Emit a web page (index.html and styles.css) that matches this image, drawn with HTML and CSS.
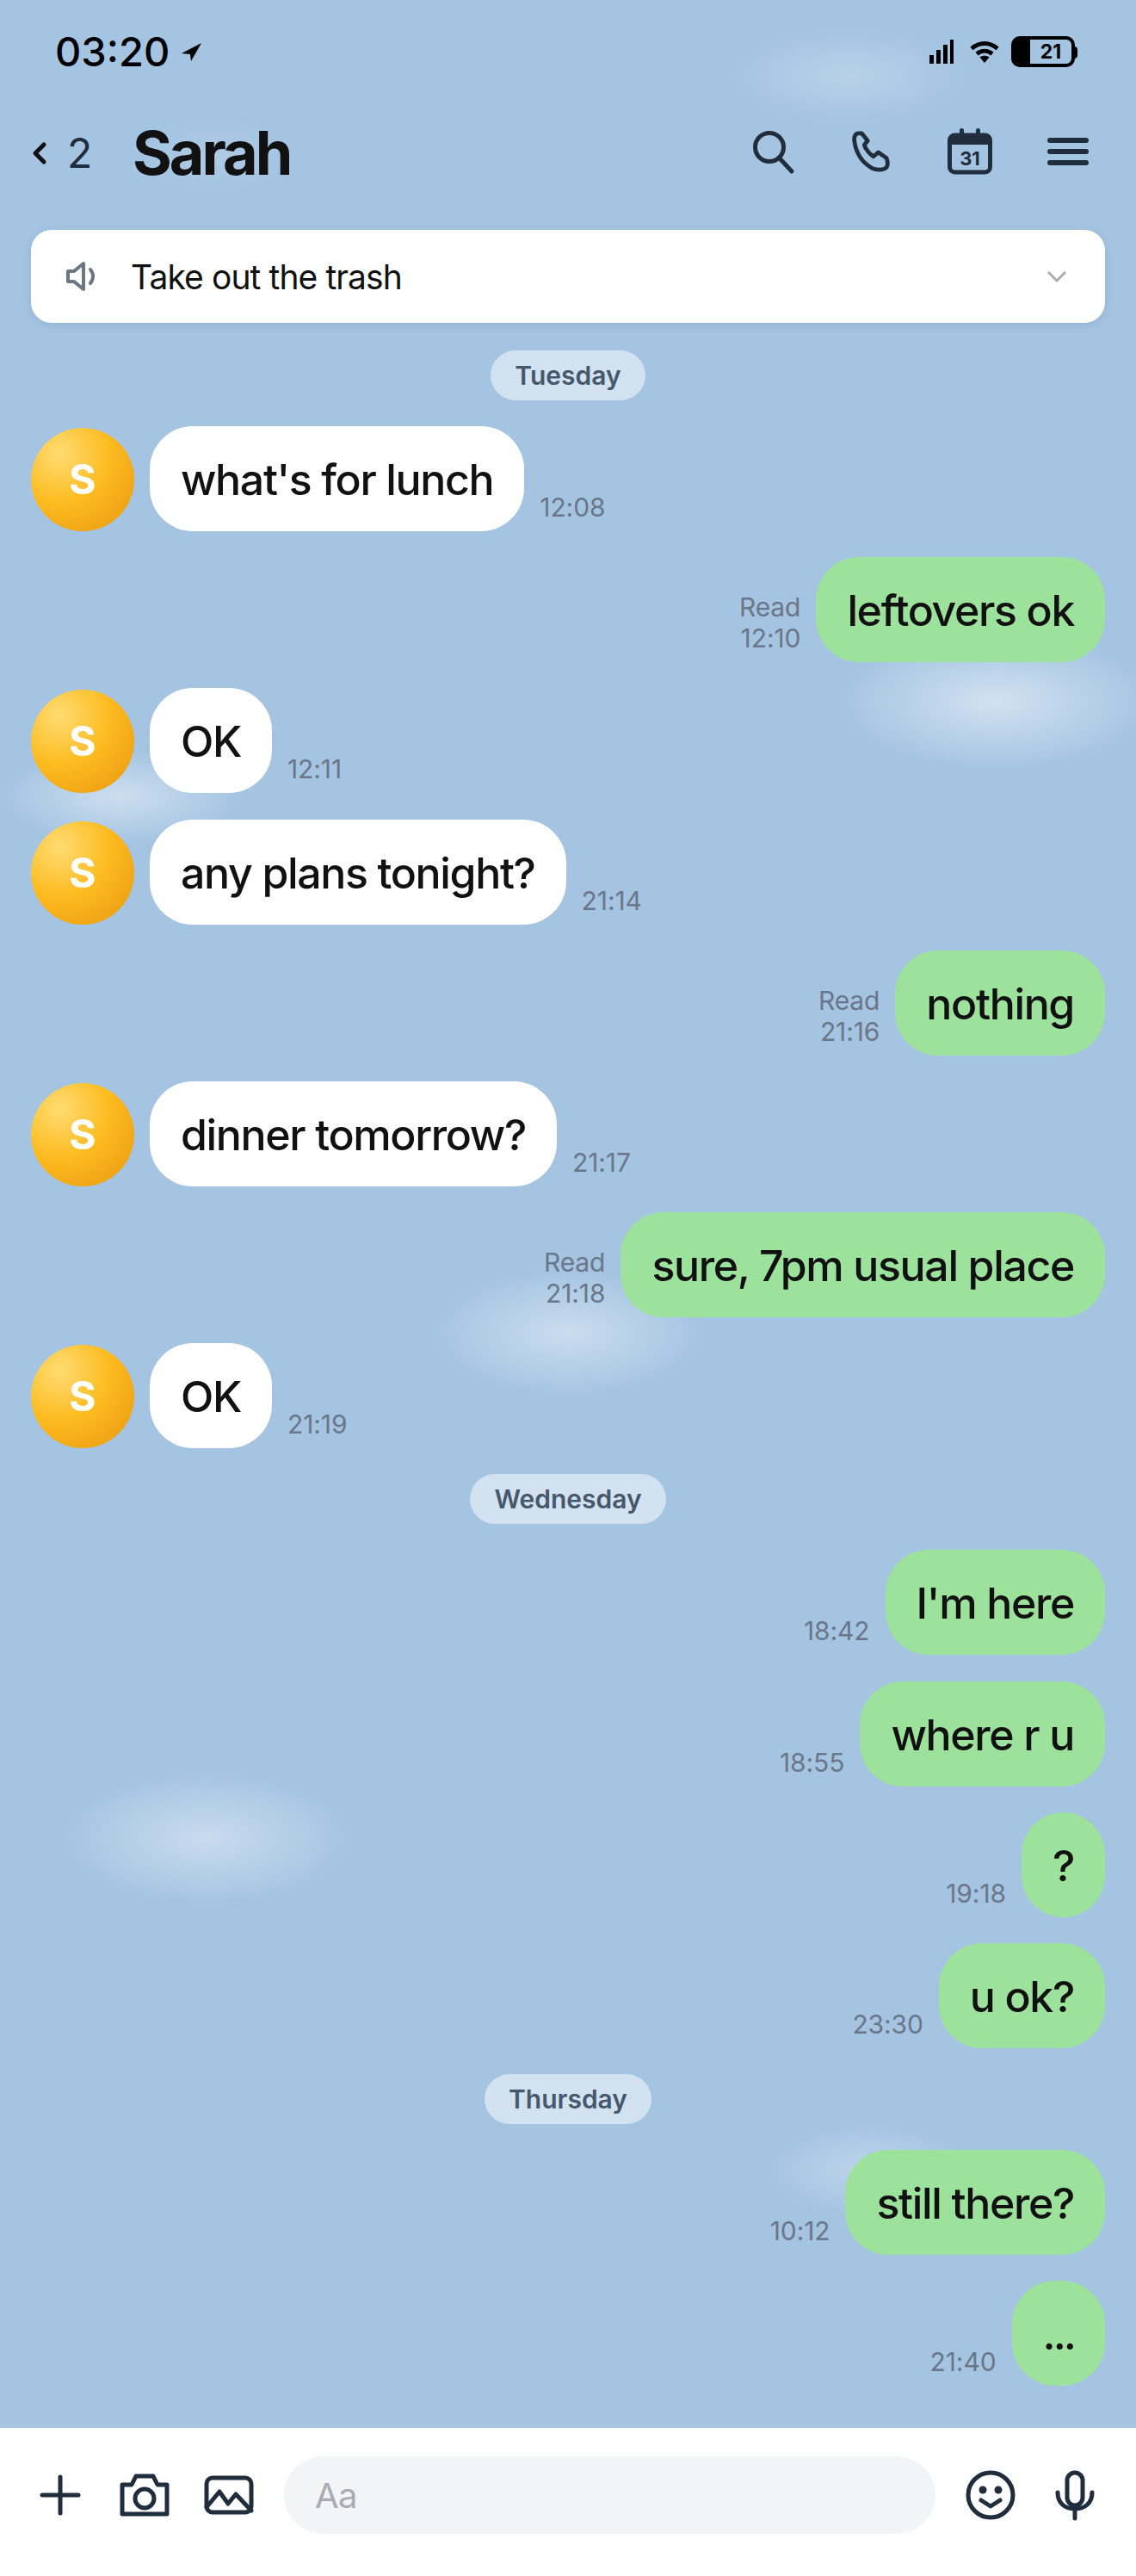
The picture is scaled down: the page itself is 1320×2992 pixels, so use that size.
FILE: index.html
```html
<!DOCTYPE html>
<html lang="en">
<head>
  <meta charset="UTF-8">
  <title>Sarah</title>
  <meta name="viewport" content="width=device-width, initial-scale=1">
  <link rel="stylesheet" href="styles.css">
</head>
<body>

<div id="app">

  <div class="statusbar">
    <div class="clock">
      <span>03:20</span>
      <svg width="23" height="21" viewBox="0 0 23 21"><path class="fill-black" d="M23 0 0 12l10 1 1 8z"/></svg>
    </div>
    <div class="status-icons">
      <svg width="28" height="28" viewBox="0 0 28 28">
        <rect class="fill-black" x="0" y="18" width="5" height="10"/>
        <rect class="fill-black" x="8" y="12" width="5" height="16"/>
        <rect class="fill-black" x="16" y="6" width="5" height="22"/>
        <rect class="fill-black" x="24" y="0" width="4" height="28"/>
      </svg>
      <svg class="wifi" width="34" height="26" viewBox="0 0 34 26">
        <path class="wifi-arc" d="M2 9.500c9-8 21-8 30 0"/>
        <path class="wifi-arc" d="M8 15.500c5.500-4.500 12.500-4.500 18 0"/>
        <path class="fill-black" d="M11.500 19.500c3-2.500 8-2.500 11 0L17 26z"/>
      </svg>
      <div class="battery">
        <div class="battery-level"></div>
        <span class="battery-num">21</span>
      </div>
    </div>
  </div>

  <div class="topbar">
    <div class="back">
      <svg width="16" height="26" viewBox="0 0 16 26"><path class="chev" d="M13 3 3 13l10 10"/></svg>
      <span class="back-count">2</span>
    </div>
    <div class="name">Sarah</div>
    <div class="actions">
      <svg width="48" height="48" viewBox="0 0 48 48">
        <circle class="ln" cx="19" cy="19" r="16.500"/>
        <path class="ln" d="M30 31l15 16"/>
      </svg>
      <svg width="44" height="48" viewBox="0 0 46 50">
        <path class="ln" d="M8 3C4 3 2 7 3 13c2 14 9 25 21 32 6 3 15 3 18-1 2-3 1-8 0-11l-10-7-6 5c-5-3-10-10-11-14l4-5-7-9z"/>
      </svg>
      <svg width="52" height="54" viewBox="0 0 52 54">
        <rect class="ln" x="2.500" y="8" width="47" height="43" rx="6"/>
        <rect class="fill-ink" x="2" y="8" width="48" height="11"/>
        <rect class="fill-ink" x="14" y="0" width="5" height="12" rx="2.500"/>
        <rect class="fill-ink" x="33" y="0" width="5" height="12" rx="2.500"/>
        <text class="cal-num" x="26" y="43" text-anchor="middle">31</text>
      </svg>
      <svg width="48" height="32" viewBox="0 0 48 32">
        <path class="ln bars" d="M3 3h42M3 16h42M3 29h42"/>
      </svg>
    </div>
  </div>

  <div class="notice">
    <svg width="38" height="36" viewBox="0 0 38 36">
      <path class="spk" d="M3 12h7l11-9v30l-11-9H3z"/>
      <path class="spk" d="M29 10c4 5 4 11 0 16"/>
    </svg>
    <span class="notice-text">Take out the trash</span>
    <svg class="notice-chev" width="24" height="14" viewBox="0 0 24 14"><path d="M2 2l10 10L22 2"/></svg>
  </div>

  <div class="chat">
    <div class="day"><span>Tuesday</span></div>

    <div class="row in">
      <div class="avatar">S</div>
      <div class="bubble">what's for lunch</div>
      <div class="meta">12:08</div>
    </div>
    <div class="row out">
      <div class="meta">Read<br>12:10</div>
      <div class="bubble">leftovers ok</div>
    </div>
    <div class="row in">
      <div class="avatar">S</div>
      <div class="bubble">OK</div>
      <div class="meta">12:11</div>
    </div>
    <div class="row in">
      <div class="avatar">S</div>
      <div class="bubble">any plans tonight?</div>
      <div class="meta">21:14</div>
    </div>
    <div class="row out">
      <div class="meta">Read<br>21:16</div>
      <div class="bubble">nothing</div>
    </div>
    <div class="row in">
      <div class="avatar">S</div>
      <div class="bubble">dinner tomorrow?</div>
      <div class="meta">21:17</div>
    </div>
    <div class="row out">
      <div class="meta">Read<br>21:18</div>
      <div class="bubble">sure, 7pm usual place</div>
    </div>
    <div class="row in">
      <div class="avatar">S</div>
      <div class="bubble">OK</div>
      <div class="meta">21:19</div>
    </div>

    <div class="day"><span>Wednesday</span></div>

    <div class="row out">
      <div class="meta">18:42</div>
      <div class="bubble">I'm here</div>
    </div>
    <div class="row out">
      <div class="meta">18:55</div>
      <div class="bubble">where r u</div>
    </div>
    <div class="row out">
      <div class="meta">19:18</div>
      <div class="bubble">?</div>
    </div>
    <div class="row out">
      <div class="meta">23:30</div>
      <div class="bubble">u ok?</div>
    </div>

    <div class="day"><span>Thursday</span></div>

    <div class="row out">
      <div class="meta">10:12</div>
      <div class="bubble">still there?</div>
    </div>
    <div class="row out">
      <div class="meta">21:40</div>
      <div class="bubble dots">...</div>
    </div>
  </div>

  <div class="composer">
    <svg width="46" height="46" viewBox="0 0 46 46"><path class="ln" d="M23 2v42M2 23h42"/></svg>
    <svg class="c-cam" width="58" height="50" viewBox="0 0 58 50">
      <path class="ln" d="M3 13h11l5-10h20l5 10h11v34H3z"/>
      <circle class="ln" cx="29" cy="29" r="11"/>
    </svg>
    <svg class="c-img" width="58" height="46" viewBox="0 0 58 46">
      <rect class="ln" x="3" y="3" width="52" height="40" rx="7"/>
      <path class="ln" d="M3 37 18 19l10 14 9-11 18 19"/>
    </svg>
    <div class="input">Aa</div>
    <svg width="58" height="58" viewBox="0 0 58 58">
      <circle class="ln" cx="29" cy="29" r="26"/>
      <circle class="fill-ink" cx="20" cy="23" r="4.500"/>
      <circle class="fill-ink" cx="38" cy="23" r="4.500"/>
      <path class="ln" d="M18 35l11 7 11-7"/>
    </svg>
    <svg class="c-mic" width="46" height="58" viewBox="0 0 46 58">
      <rect class="ln" x="14" y="3" width="18" height="38" rx="9"/>
      <path class="ln" d="M3 26c0 12 8 19 20 19s20-7 20-19M23 45v11"/>
    </svg>
  </div>

</div>

</body>
</html>
```

FILE: styles.css
```css
:root {
  --bg:     #a4c4e2;
  --ink:    #1f2d3d;
  --black:  #111;
  --green:  #9ce29c;
  --meta:   #6b7688;
}

* { box-sizing: border-box; }

body {
  margin: 0;
  background: var(--bg);
  color: var(--black);
  font-family: Inter, "Noto Sans", sans-serif;
}

#app {
  width: 1320px; height: 2992px;
  display: flex; flex-direction: column;
  overflow: hidden;
  background-color: var(--bg);
  /* the pale clouds behind the conversation */
  background-image:
    radial-gradient(ellipse 140px 55px at 985px 88px, rgba(255,255,255,.22), transparent),
    radial-gradient(ellipse 90px 45px at 250px 180px, rgba(255,255,255,.12), transparent),
    radial-gradient(ellipse 185px 80px at 1158px 815px, rgba(255,255,255,.5), transparent),
    radial-gradient(ellipse 140px 55px at 140px 925px, rgba(255,255,255,.45), transparent),
    radial-gradient(ellipse 160px 75px at 660px 1548px, rgba(255,255,255,.42), transparent),
    radial-gradient(ellipse 170px 78px at 240px 2135px, rgba(255,255,255,.4), transparent),
    radial-gradient(ellipse 120px 55px at 1010px 2520px, rgba(255,255,255,.28), transparent);
}

svg { display: block; flex: none; overflow: visible; }

.ln { fill: none; stroke: var(--ink); stroke-width: 5; stroke-linecap: round; stroke-linejoin: round; }
.ln.bars { stroke-width: 6; }
.fill-ink { fill: var(--ink); }
.fill-black { fill: #000; }

.statusbar {
  height: 120px; flex: none;
  padding: 42px 71px 0 64px;
  display: flex; justify-content: space-between; align-items: flex-start;
}

.clock {
  display: flex; align-items: center; gap: 14px;
  font-size: 47px; font-weight: 500; line-height: 36px;
  color: #000;
}

.status-icons { display: flex; align-items: center; }
.wifi { margin-left: 19px; }
.wifi-arc { fill: none; stroke: #000; stroke-width: 5; }

.battery {
  position: relative;
  margin-left: 14px;
  width: 74px; height: 36px;
  border: 4px solid #000; border-radius: 10px;
  text-align: center;
}
.battery::after {
  content: "";
  position: absolute; left: 100%; top: 8px;
  width: 7px; height: 14px;
  background: #000; border-radius: 0 4px 4px 0;
}
.battery-level {
  position: absolute; left: 0; top: 0; bottom: 0;
  width: 18px; background: #000; border-radius: 5px 0 0 5px;
}
.battery-num {
  display: block; padding-left: 18px;
  font-size: 23px; font-weight: 700; line-height: 28px;
  color: #000;
}

.topbar {
  height: 116px; flex: none;
  padding: 0 55px 0 38px;
  display: flex; align-items: center;
}

.back { display: flex; align-items: center; gap: 24px; width: 116px; flex: none; }
.chev { fill: none; stroke: var(--black); stroke-width: 5; stroke-linecap: round; stroke-linejoin: round; }
.back-count { font-size: 48px; color: var(--ink); line-height: 1; }

.name { font-size: 70px; font-weight: 700; letter-spacing: -3px; line-height: 1; }

.actions { margin: 0 0 4px auto; display: flex; align-items: center; gap: 67px; }
.actions svg:last-child { margin-left: -3px; }
.cal-num { font: 700 22px Inter, sans-serif; fill: var(--ink); }

.notice {
  height: 108px; flex: none;
  margin: 31px 36px 0;
  padding: 0 44px 0 40px;
  display: flex; align-items: center;
  background: #fff; border-radius: 24px;
  box-shadow: 0 2px 10px rgba(60,90,130,.15);
}
.spk { fill: none; stroke: #6b7684; stroke-width: 4; stroke-linejoin: round; stroke-linecap: round; }
.notice-text { margin-left: 38px; font-size: 39px; letter-spacing: -.9px; }
.notice-chev { margin-left: auto; fill: none; stroke: #a8acb5; stroke-width: 3; }

.chat {
  flex: 1;
  padding: 32px 36px 0;
  display: flex; flex-direction: column; gap: 30.15px;
}

.day { display: flex; justify-content: center; }
.day span {
  height: 58px; line-height: 58px;
  padding: 0 28px;
  background: #d2e2f0; border-radius: 29px;
  font-size: 30px; font-weight: 600; color: #46586c;
}

.row { display: flex; align-items: flex-end; gap: 18px; }
.row.out { justify-content: flex-end; }

.bubble {
  height: 122px; line-height: 124px;
  padding: 0 36px;
  border-radius: 50px;
  font-size: 50px; font-weight: 450; letter-spacing: -1.35px;
  white-space: nowrap;
}
.bubble.dots { letter-spacing: -3px; }
.in .bubble { background: #fff; }
.out .bubble { background: var(--green); }

.avatar {
  width: 120px; height: 120px; flex: none;
  border-radius: 50%;
  background: radial-gradient(circle at 28% 25%, #ffdc73 0, #fdbc22 45%, #e8960c 100%);
  color: #fff;
  font-size: 48px; font-weight: 700;
  text-align: center; line-height: 120px;
}

.meta {
  padding-bottom: 10px;
  font-size: 30px; line-height: 36px; letter-spacing: -.1px;
  color: var(--meta);
  text-align: right;
}

.composer {
  height: 172px; flex: none;
  padding: 0 48px 16px 47px;
  display: flex; align-items: center;
  background: #fff;
}
.c-cam { margin-left: 46px; }
.c-img { margin-left: 40px; }
.input {
  flex: 1; height: 90px;
  margin: 0 35px;
  padding-left: 36px;
  background: #f2f4f6; border-radius: 45px;
  font-size: 40px; line-height: 92px; letter-spacing: -.5px;
  color: #a8abb6;
}
.c-mic { margin-left: 46px; }
```
